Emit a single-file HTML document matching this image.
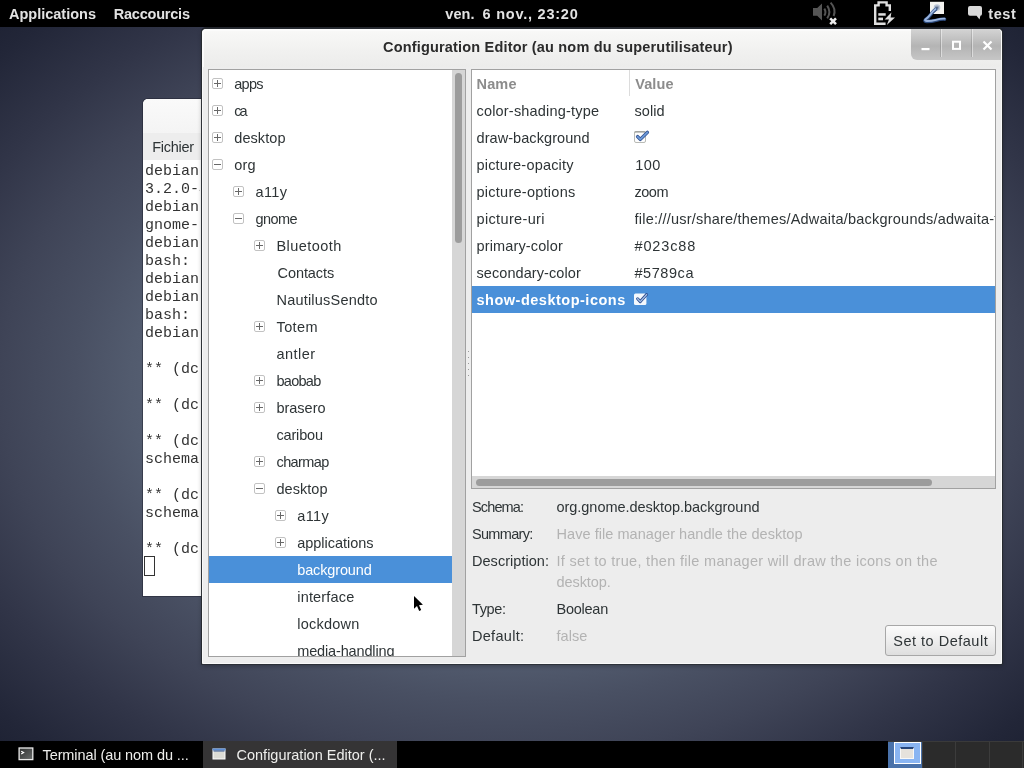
<!DOCTYPE html>
<html><head><meta charset="utf-8"><title>Configuration Editor</title>
<style>
*{margin:0;padding:0;box-sizing:border-box}
html,body{width:1024px;height:768px;overflow:hidden}
body{position:relative;font-family:"Liberation Sans",sans-serif;background:#343a4e;
 background:
  radial-gradient(ellipse 512px 370px at 512px 384px, #67718a 0%, #5e687c 55%, #525b6e 74.6%, #495063 85.4%, #3f4457 100%, #313548 115.6%, #222638 133.8%, #1b1f30 146%),
  #2b2f43;}
.t{position:absolute;white-space:nowrap;line-height:20px;height:20px;font-size:14.5px}
.m{font-family:"Liberation Mono",monospace;font-size:15px;color:#333}
.a{position:absolute}
#tx{position:absolute;left:0;top:0;width:1024px;height:768px;will-change:transform;overflow:hidden}
#top{left:0;top:0;width:1024px;height:27px;background:#000}
#bot{left:0;top:741px;width:1024px;height:27px;background:#000}
#bact{left:203px;top:741px;width:194px;height:27px;background:#353435}
/* terminal */
#term{left:143px;top:99px;width:60px;height:497px;background:#fff;border-radius:5px 0 0 0;overflow:hidden;box-shadow:0 0 0 1px rgba(30,32,45,.5)}
#ttitle{left:0;top:0;width:60px;height:34px;background:linear-gradient(#fafafa,#f4f4f4)}
#tmenu{left:0;top:34px;width:60px;height:27px;background:#ededed}
#tcur{left:144px;top:556px;width:11px;height:20px;border:1px solid #333}
/* config window */
#win{left:202px;top:29px;width:800px;height:635px;background:#ededed;border-radius:4px 4px 0 0;
 box-shadow:0 0 0 1px rgba(40,44,50,.75), 0 -1px 0 1px rgba(30,32,36,.8), 0 2px 5px rgba(0,0,0,.3);border:1px solid #f9f9f9}
#wtitle{left:202px;top:29px;width:800px;height:38px;border-radius:4px 4px 0 0;background:linear-gradient(#f8f8f7,#f0f0ef 60%,#ececeb);border:2px solid #fbfbfb;border-bottom:0;border-right-width:1px}
#wbtn{left:911px;top:29px;width:90px;height:31px;border-radius:0 4px 0 6px;background:linear-gradient(#d4d4d4,#b4b4b4 55%,#c6c6c6);}
.wdiv{top:29px;width:1px;height:28px;background:rgba(255,255,255,.45);box-shadow:-1px 0 0 rgba(0,0,0,.12)}
#tree{left:208px;top:69px;width:258px;height:588px;background:#fff;border:1px solid #a1a1a1}
#tsb{left:452px;top:70px;width:13px;height:586px;background:#d6d6d6}
#tth{left:455px;top:73px;width:7px;height:170px;background:#9c9c9c;border-radius:4px}
#tsel{left:209px;top:556px;width:243px;height:27px;background:#4a90d9}
#list{left:471px;top:69px;width:525px;height:420px;background:#fff;border:1px solid #a1a1a1}
#lsb{left:472px;top:476px;width:523px;height:12px;background:#d6d6d6}
#lth{left:476px;top:479px;width:456px;height:7px;background:#9c9c9c;border-radius:4px}
#lsel{left:472px;top:286px;width:523px;height:27px;background:#4a90d9}
#ldiv{left:629px;top:70px;width:1px;height:26px;background:#dcdcdc}
.exp{position:absolute;width:11px;height:11px;border:1px solid #c2c2c2;border-radius:2px;background:#fff}
.exp .h{position:absolute;left:1px;top:4px;width:7px;height:1px;background:#686868}
.exp .v{position:absolute;left:4px;top:1px;width:1px;height:7px;background:#686868}
#btn{left:885px;top:625px;width:111px;height:31px;border:1px solid #a7a7a7;border-radius:3px;background:linear-gradient(#fbfbfb,#eeeeee 50%,#dedede)}
.dot{position:absolute;left:468px;width:1px;height:1px;background:#9a9a9a}
</style></head><body>

<div class="a" id="top"></div>
<div class="a" id="term"><div class="a" id="ttitle"></div><div class="a" id="tmenu"></div></div>
<div class="a" id="tcur"></div>
<div class="a" id="win"></div>
<div class="a" id="wtitle"></div>
<div class="a" id="wbtn"></div>
<div class="a wdiv" style="left:941px"></div><div class="a wdiv" style="left:972px"></div>
<svg class="a" style="left:911px;top:28px" width="91" height="31" viewBox="0 0 91 31">
 <rect x="10.5" y="20" width="8" height="2.2" fill="#fff"/>
 <rect x="42" y="13.7" width="7" height="7.2" fill="none" stroke="#fff" stroke-width="2"/>
 <path d="M72.5 13.5 L80.5 21.5 M80.5 13.5 L72.5 21.5" stroke="#fff" stroke-width="2.2" fill="none"/>
</svg>
<div class="a" id="tree"></div><div class="a" id="tsb"></div><div class="a" id="tth"></div><div class="a" id="tsel"></div>
<div class="a" id="list"></div><div class="a" id="lsb"></div><div class="a" id="lth"></div><div class="a" id="lsel"></div><div class="a" id="ldiv"></div>
<div class="a" id="btn"></div>
<div class="a" id="bot"></div><div class="a" id="bact"></div>

<div class="dot" style="top:351px"></div><div class="dot" style="top:357px"></div><div class="dot" style="top:363px"></div><div class="dot" style="top:369px"></div><div class="dot" style="top:375px"></div>
<div class="exp" style="left:212px;top:78px"><i class="h"></i><i class="v"></i></div><div class="exp" style="left:212px;top:105px"><i class="h"></i><i class="v"></i></div><div class="exp" style="left:212px;top:132px"><i class="h"></i><i class="v"></i></div><div class="exp" style="left:212px;top:159px"><i class="h"></i></div><div class="exp" style="left:233px;top:186px"><i class="h"></i><i class="v"></i></div><div class="exp" style="left:233px;top:213px"><i class="h"></i></div><div class="exp" style="left:254px;top:240px"><i class="h"></i><i class="v"></i></div><div class="exp" style="left:254px;top:321px"><i class="h"></i><i class="v"></i></div><div class="exp" style="left:254px;top:375px"><i class="h"></i><i class="v"></i></div><div class="exp" style="left:254px;top:402px"><i class="h"></i><i class="v"></i></div><div class="exp" style="left:254px;top:456px"><i class="h"></i><i class="v"></i></div><div class="exp" style="left:254px;top:483px"><i class="h"></i></div><div class="exp" style="left:275px;top:510px"><i class="h"></i><i class="v"></i></div><div class="exp" style="left:275px;top:537px"><i class="h"></i><i class="v"></i></div>
<!-- volume muted -->
<svg class="a" style="left:808px;top:0" width="40" height="27" viewBox="0 0 40 27">
 <g fill="#555555">
  <path d="M5 8 H9.2 L14 3.6 V20.6 L9.2 15.8 H5 Z"/>
 </g>
 <g fill="none" stroke="#555555" stroke-width="2">
  <path d="M16.3 8.6 Q18.6 12 16.3 15.6"/>
  <path d="M19.2 5.6 Q23.6 12 19.2 18.4"/>
  <path d="M22.6 2.6 Q28.6 9 25.6 16"/>
 </g>
 <path d="M22.2 18.4 L28 24.2 M28 18.4 L22.2 24.2" stroke="#ececec" stroke-width="2.6" fill="none"/>
</svg>
<!-- battery -->
<svg class="a" style="left:864px;top:0" width="40" height="27" viewBox="0 0 40 27">
 <g fill="none" stroke="#e0e0e0" stroke-width="2.4" stroke-linejoin="miter">
  <path d="M25.8 11 V5.4 H22.6 V2.4 H14.6 V5.4 H11.2 V23.8 H21.6"/>
 </g>
 <rect x="14.3" y="13.2" width="7.4" height="2.5" fill="#e0e0e0"/>
 <rect x="14.3" y="17.6" width="4.7" height="2.7" fill="#e0e0e0"/>
 <path d="M27.4 12.6 L20.6 19.4 H25 L22.8 25 L31 17.6 H26.6 Z" fill="#e0e0e0"/>
</svg>
<!-- network -->
<svg class="a" style="left:916px;top:0" width="40" height="27" viewBox="0 0 40 27">
 <rect x="14" y="1.8" width="14" height="12.2" fill="#f4f3f0"/>
 <circle cx="21" cy="7.6" r="2.7" fill="#8f9db4" stroke="#bcc6d6" stroke-width="1.2"/>
 <circle cx="21" cy="7.8" r="0.9" fill="#4a5a78"/>
 <path d="M19.6 9.4 Q16.8 11.6 15 14.2 Q12.4 17.8 9.2 20 Q8 21.4 11 21.6 Q16 21.6 20 20.4 Q25 19 28.6 19.2" fill="none" stroke="#2c4a7c" stroke-width="3.4" stroke-linecap="round"/>
 <path d="M19.6 9 Q16.8 11.2 15 13.8 Q12.4 17.4 9.2 19.6 Q8.4 20.8 11 21 Q16 21 20 19.8 Q25 18.4 28.6 18.6" fill="none" stroke="#9ab4de" stroke-width="1.9" stroke-linecap="round"/>
</svg>
<!-- chat bubble -->
<svg class="a" style="left:960px;top:0" width="28" height="27" viewBox="0 0 28 27">
 <path d="M10 5.9 H20 Q22 5.9 22 7.9 V13.8 Q22 15.8 20.4 15.8 L19.5 19.6 L16.6 15.8 H10 Q8 15.8 8 13.8 V7.9 Q8 5.9 10 5.9 Z" fill="#d9d9d9"/>
</svg>
<!-- checkboxes -->
<svg class="a" style="left:632px;top:129px" width="20" height="16" viewBox="0 0 20 16">
 <rect x="2.5" y="2.5" width="11" height="11" rx="1.5" fill="#fdfdfd" stroke="#b9bbb6"/>
 <path d="M2.5 3 H13.5" stroke="#8d8f8a" stroke-width="1"/>
 <path d="M5.6 7.6 L8.3 10.4 L15.4 3.4" fill="none" stroke="#2f4f8f" stroke-width="3.4" stroke-linecap="round" stroke-linejoin="round"/>
 <path d="M5.6 7.6 L8.3 10.4 L15.4 3.4" fill="none" stroke="#6d9ad8" stroke-width="1.8" stroke-linecap="round" stroke-linejoin="round"/>
</svg>
<svg class="a" style="left:632px;top:291px" width="20" height="16" viewBox="0 0 20 16">
 <rect x="2" y="2.5" width="12.4" height="11.4" rx="1.5" fill="#f4f8fd"/>
 <path d="M5.6 7.8 L8.3 10.6 L14.6 3.6" fill="none" stroke="#2f4f8f" stroke-width="3" stroke-linecap="round" stroke-linejoin="round"/>
 <path d="M5.6 7.8 L8.3 10.6 L14.6 3.6" fill="none" stroke="#a9c2e8" stroke-width="1.3" stroke-linecap="round" stroke-linejoin="round"/>
</svg>
<!-- taskbar icons -->
<svg class="a" style="left:16px;top:744px" width="22" height="20" viewBox="0 0 22 20">
 <defs><linearGradient id="tg" x1="0" y1="0" x2="1" y2="1"><stop offset="0" stop-color="#2f3131"/><stop offset="1" stop-color="#6a6d6c"/></linearGradient></defs>
 <rect x="3.1" y="4" width="13.7" height="11.6" fill="url(#tg)" stroke="#ececec" stroke-width="1.3"/>
 <path d="M5.2 7.2 L7.6 8.6 L5.2 10" stroke="#fff" stroke-width="1.2" fill="none"/>
</svg>
<svg class="a" style="left:210px;top:744px" width="22" height="20" viewBox="0 0 22 20">
 <rect x="2.5" y="4.5" width="13" height="11" fill="#fff"/>
 <rect x="3.5" y="7.5" width="11" height="7" fill="#dcdcd5"/>
 <rect x="2.5" y="4.5" width="13" height="2" fill="#5f8fd6"/>
 <rect x="3.5" y="6.5" width="11" height="1" fill="#27467a"/>
</svg>
<!-- workspace switcher -->
<div class="a" style="left:888px;top:741px;width:136px;height:27px;background:#2b2b2b"></div>
<div class="a" style="left:888px;top:741px;width:34px;height:27px;background:#4a72aa"></div>
<div class="a" style="left:894px;top:742px;width:27px;height:22px;background:#8ab5f2;border:1px solid #fff"></div>
<div class="a" style="left:900px;top:747px;width:14px;height:12px;background:#e6e2dc;border:1px solid #f8f8f8;border-top:2px solid #27467a"></div>
<div class="a" style="left:922px;top:741px;width:1px;height:27px;background:#3c3c3c"></div>
<div class="a" style="left:955px;top:741px;width:1px;height:27px;background:#3c3c3c"></div>
<div class="a" style="left:989px;top:741px;width:1px;height:27px;background:#3c3c3c"></div>
<div class="a" style="left:1022px;top:741px;width:1px;height:27px;background:#3c3c3c"></div>
<div class="a" style="left:888px;top:741px;width:136px;height:1px;background:#3a3a3a"></div>
<!-- cursor -->
<svg class="a" style="left:410px;top:592px;z-index:50" width="20" height="24" viewBox="0 0 20 24">
 <path d="M4 4 V16.8 L7 14 L9.2 18.9 L11.2 18 L9 13.2 L12.9 12.8 Z" fill="#000" stroke="#fff" stroke-width="1" stroke-linejoin="round" paint-order="stroke"/>
</svg>

<div id="tx">
<div class="t" style="left:9.00px;top:4.23px;font-size:14.5px;letter-spacing:-0.001px;color:#e2e2e2;font-weight:700;">Applications</div>
<div class="t" style="left:113.75px;top:4.23px;font-size:14.5px;letter-spacing:-0.215px;color:#e2e2e2;font-weight:700;">Raccourcis</div>
<div class="t" style="left:445.25px;top:4.48px;font-size:14.5px;letter-spacing:0.078px;color:#e2e2e2;font-weight:700;">ven.</div>
<div class="t" style="left:482.50px;top:4.48px;font-size:14.5px;letter-spacing:0.773px;color:#e2e2e2;font-weight:700;">6 nov., 23:20</div>
<div class="t" style="left:988.25px;top:3.98px;font-size:14.5px;letter-spacing:0.573px;color:#e2e2e2;font-weight:700;">test</div>
<div class="t" style="left:383.00px;top:37.48px;font-size:14.5px;letter-spacing:0.182px;color:#2b2b2b;font-weight:700;">Configuration Editor (au nom du superutilisateur)</div>
<div class="t" style="left:234.25px;top:73.73px;font-size:14.5px;letter-spacing:-0.729px;color:#2e3436;">apps</div>
<div class="t" style="left:234.25px;top:100.73px;font-size:14.5px;letter-spacing:-2.076px;color:#2e3436;">ca</div>
<div class="t" style="left:234.25px;top:127.73px;font-size:14.5px;letter-spacing:0.078px;color:#2e3436;">desktop</div>
<div class="t" style="left:234.25px;top:154.73px;font-size:14.5px;letter-spacing:0.149px;color:#2e3436;">org</div>
<div class="t" style="left:255.50px;top:181.73px;font-size:14.5px;letter-spacing:0.379px;color:#2e3436;">a11y</div>
<div class="t" style="left:255.50px;top:208.73px;font-size:14.5px;letter-spacing:-0.585px;color:#2e3436;">gnome</div>
<div class="t" style="left:276.50px;top:235.73px;font-size:14.5px;letter-spacing:0.434px;color:#2e3436;">Bluetooth</div>
<div class="t" style="left:277.50px;top:262.73px;font-size:14.5px;letter-spacing:-0.067px;color:#2e3436;">Contacts</div>
<div class="t" style="left:276.50px;top:289.73px;font-size:14.5px;letter-spacing:0.205px;color:#2e3436;">NautilusSendto</div>
<div class="t" style="left:276.50px;top:316.73px;font-size:14.5px;letter-spacing:0.379px;color:#2e3436;">Totem</div>
<div class="t" style="left:276.50px;top:343.73px;font-size:14.5px;letter-spacing:0.447px;color:#2e3436;">antler</div>
<div class="t" style="left:276.50px;top:370.73px;font-size:14.5px;letter-spacing:-0.727px;color:#2e3436;">baobab</div>
<div class="t" style="left:276.50px;top:397.73px;font-size:14.5px;letter-spacing:-0.028px;color:#2e3436;">brasero</div>
<div class="t" style="left:276.50px;top:424.73px;font-size:14.5px;letter-spacing:-0.177px;color:#2e3436;">caribou</div>
<div class="t" style="left:276.50px;top:451.73px;font-size:14.5px;letter-spacing:-0.612px;color:#2e3436;">charmap</div>
<div class="t" style="left:276.50px;top:478.73px;font-size:14.5px;letter-spacing:0.037px;color:#2e3436;">desktop</div>
<div class="t" style="left:297.25px;top:505.73px;font-size:14.5px;letter-spacing:0.379px;color:#2e3436;">a11y</div>
<div class="t" style="left:297.25px;top:532.73px;font-size:14.5px;letter-spacing:-0.030px;color:#2e3436;">applications</div>
<div class="t" style="left:297.25px;top:559.73px;font-size:14.5px;letter-spacing:-0.142px;color:#ffffff;">background</div>
<div class="t" style="left:297.25px;top:586.73px;font-size:14.5px;letter-spacing:0.174px;color:#2e3436;">interface</div>
<div class="t" style="left:297.25px;top:613.73px;font-size:14.5px;letter-spacing:0.221px;color:#2e3436;">lockdown</div>
<div class="t" style="left:297.25px;top:640.73px;font-size:14.5px;letter-spacing:-0.146px;color:#2e3436;height:15.3px;overflow:hidden;">media-handling</div>
<div class="t" style="left:476.50px;top:73.73px;font-size:14.5px;letter-spacing:0.167px;color:#8c8c8c;font-weight:700;">Name</div>
<div class="t" style="left:635.25px;top:73.73px;font-size:14.5px;letter-spacing:0.090px;color:#8c8c8c;font-weight:700;">Value</div>
<div class="t" style="left:476.50px;top:100.73px;font-size:14.5px;letter-spacing:0.189px;color:#2e3436;">color-shading-type</div>
<div class="t" style="left:634.50px;top:100.73px;font-size:14.5px;letter-spacing:0.043px;color:#2e3436;">solid</div>
<div class="t" style="left:476.50px;top:127.73px;font-size:14.5px;letter-spacing:0.068px;color:#2e3436;">draw-background</div>
<div class="t" style="left:476.50px;top:154.73px;font-size:14.5px;letter-spacing:0.193px;color:#2e3436;">picture-opacity</div>
<div class="t" style="left:635.25px;top:154.73px;font-size:14.5px;letter-spacing:0.407px;color:#2e3436;">100</div>
<div class="t" style="left:476.50px;top:181.73px;font-size:14.5px;letter-spacing:0.260px;color:#2e3436;">picture-options</div>
<div class="t" style="left:634.50px;top:181.73px;font-size:14.5px;letter-spacing:-0.484px;color:#2e3436;">zoom</div>
<div class="t" style="left:476.50px;top:208.73px;font-size:14.5px;letter-spacing:0.353px;color:#2e3436;">picture-uri</div>
<div class="t" style="left:634.50px;top:208.73px;font-size:14.5px;letter-spacing:0.218px;color:#2e3436;width:360.50px;overflow:hidden;">file:///usr/share/themes/Adwaita/backgrounds/adwaita-timed.xml</div>
<div class="t" style="left:476.50px;top:235.73px;font-size:14.5px;letter-spacing:0.138px;color:#2e3436;">primary-color</div>
<div class="t" style="left:634.50px;top:235.73px;font-size:14.5px;letter-spacing:0.852px;color:#2e3436;">#023c88</div>
<div class="t" style="left:476.50px;top:262.73px;font-size:14.5px;letter-spacing:0.078px;color:#2e3436;">secondary-color</div>
<div class="t" style="left:634.50px;top:262.73px;font-size:14.5px;letter-spacing:0.558px;color:#2e3436;">#5789ca</div>
<div class="t" style="left:476.50px;top:289.73px;font-size:14.5px;letter-spacing:0.504px;color:#ffffff;font-weight:700;">show-desktop-icons</div>
<div class="t" style="left:472.00px;top:497.23px;font-size:14.5px;letter-spacing:-0.869px;color:#2e3436;">Schema:</div>
<div class="t" style="left:556.50px;top:497.23px;font-size:14.5px;letter-spacing:-0.035px;color:#2e3436;">org.gnome.desktop.background</div>
<div class="t" style="left:472.00px;top:524.23px;font-size:14.5px;letter-spacing:-0.687px;color:#2e3436;">Summary:</div>
<div class="t" style="left:556.50px;top:524.23px;font-size:14.5px;letter-spacing:0.050px;color:#b3b3b3;">Have file manager handle the desktop</div>
<div class="t" style="left:472.00px;top:551.23px;font-size:14.5px;letter-spacing:0.040px;color:#2e3436;">Description:</div>
<div class="t" style="left:556.50px;top:551.23px;font-size:14.5px;letter-spacing:0.310px;color:#b3b3b3;">If set to true, then file manager will draw the icons on the</div>
<div class="t" style="left:556.50px;top:571.73px;font-size:14.5px;letter-spacing:-0.080px;color:#b3b3b3;">desktop.</div>
<div class="t" style="left:472.00px;top:598.73px;font-size:14.5px;letter-spacing:-0.367px;color:#2e3436;">Type:</div>
<div class="t" style="left:556.50px;top:598.73px;font-size:14.5px;letter-spacing:-0.244px;color:#2e3436;">Boolean</div>
<div class="t" style="left:472.00px;top:625.98px;font-size:14.5px;letter-spacing:0.290px;color:#2e3436;">Default:</div>
<div class="t" style="left:556.50px;top:625.98px;font-size:14.5px;letter-spacing:0.032px;color:#b3b3b3;">false</div>
<div class="t" style="left:893.25px;top:630.98px;font-size:14.5px;letter-spacing:0.507px;color:#2e3436;">Set to Default</div>
<div class="t" style="left:152.25px;top:136.73px;font-size:14.5px;letter-spacing:-0.294px;color:#2e3436;">Fichier</div>
<div class="t m" style="left:145px;top:161.75px;width:55px;overflow:hidden;">debian </div>
<div class="t m" style="left:145px;top:179.75px;width:55px;overflow:hidden;">3.2.0-4</div>
<div class="t m" style="left:145px;top:197.75px;width:55px;overflow:hidden;">debian </div>
<div class="t m" style="left:145px;top:215.75px;width:55px;overflow:hidden;">gnome-s</div>
<div class="t m" style="left:145px;top:233.75px;width:55px;overflow:hidden;">debian </div>
<div class="t m" style="left:145px;top:251.75px;width:55px;overflow:hidden;">bash: c</div>
<div class="t m" style="left:145px;top:269.75px;width:55px;overflow:hidden;">debian </div>
<div class="t m" style="left:145px;top:287.75px;width:55px;overflow:hidden;">debian </div>
<div class="t m" style="left:145px;top:305.75px;width:55px;overflow:hidden;">bash: c</div>
<div class="t m" style="left:145px;top:323.75px;width:55px;overflow:hidden;">debian </div>
<div class="t m" style="left:145px;top:359.75px;width:55px;overflow:hidden;">** (dco</div>
<div class="t m" style="left:145px;top:395.75px;width:55px;overflow:hidden;">** (dco</div>
<div class="t m" style="left:145px;top:431.75px;width:55px;overflow:hidden;">** (dco</div>
<div class="t m" style="left:145px;top:449.75px;width:55px;overflow:hidden;">schema:</div>
<div class="t m" style="left:145px;top:485.75px;width:55px;overflow:hidden;">** (dco</div>
<div class="t m" style="left:145px;top:503.75px;width:55px;overflow:hidden;">schema:</div>
<div class="t m" style="left:145px;top:539.75px;width:55px;overflow:hidden;">** (dco</div>
<div class="t" style="left:42.50px;top:745.23px;font-size:14.5px;letter-spacing:-0.093px;color:#eeeeec;">Terminal (au nom du ...</div>
<div class="t" style="left:236.50px;top:745.23px;font-size:14.5px;letter-spacing:-0.000px;color:#eeeeec;">Configuration Editor (...</div>
</div>
</body></html>
